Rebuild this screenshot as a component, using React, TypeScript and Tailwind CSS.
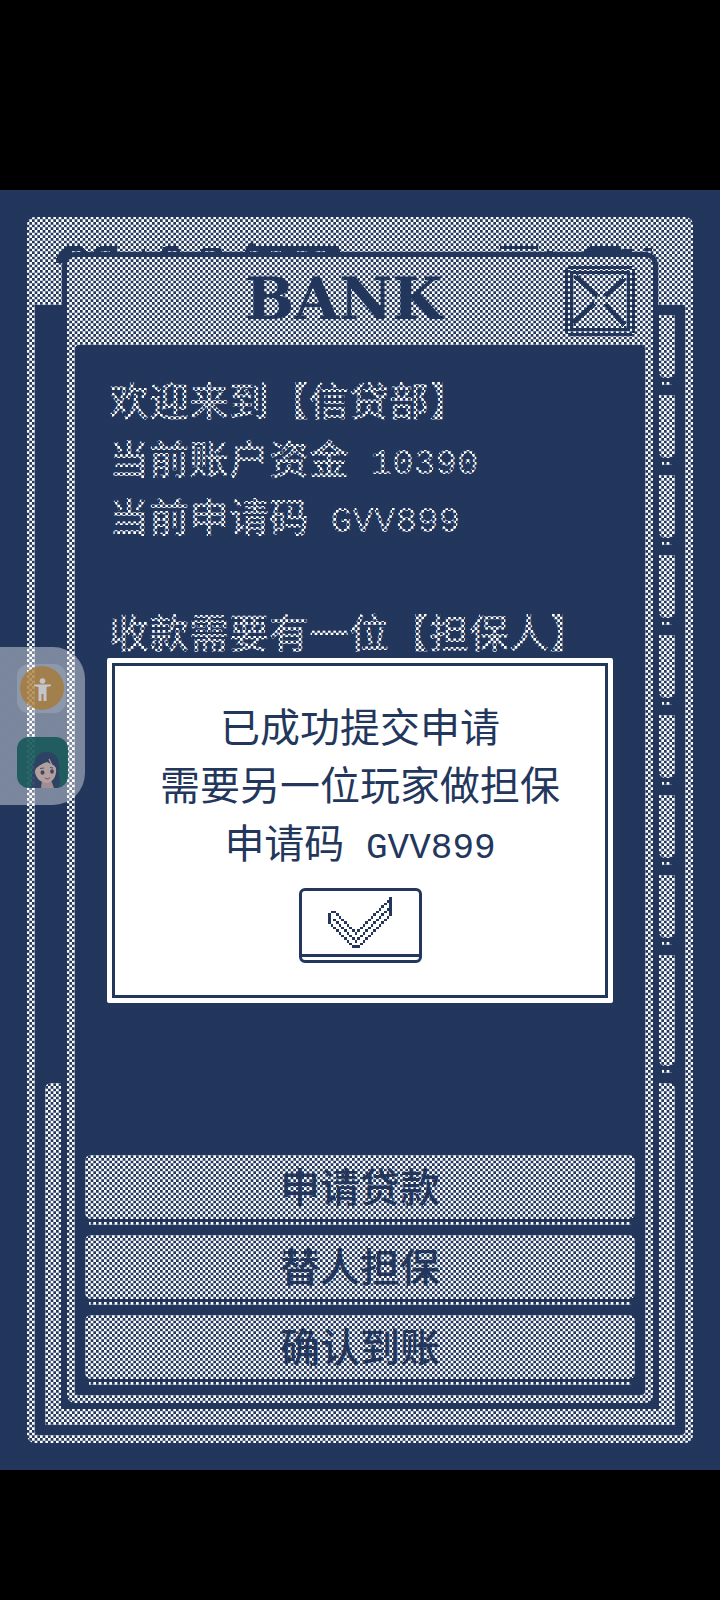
import React from "react";

const CJK = "font-['Noto_Sans_CJK_SC',sans-serif]";
const MONO = "font-['Liberation_Mono','Noto_Sans_CJK_SC',monospace]";

type Point = [number, number];

/** Pixels of a stepped line that runs through the given points. */
function pixelLine(points: Point[]): Point[] {
  const out: Point[] = [];
  for (let i = 0; i < points.length - 1; i++) {
    const [x0, y0] = points[i];
    const [x1, y1] = points[i + 1];
    const n = Math.max(Math.abs(x1 - x0), Math.abs(y1 - y0));
    for (let k = 0; k <= n; k++) {
      out.push([Math.round(x0 + ((x1 - x0) * k) / n), Math.round(y0 + ((y1 - y0) * k) / n)]);
    }
  }
  return out;
}

function toPath(pixels: Point[]) {
  return pixels.map(([x, y]) => `M${x} ${y}h1v1h-1z`).join("");
}

const CHECK = toPath([
  ...pixelLine([[0, 9], [0, 6], [1, 5], [2, 5], [10, 13], [23, 0], [23, 6], [11, 18], [9, 18], [0, 9]]),
  ...pixelLine([[2, 8], [10, 16], [23, 3]]),
]);

const DITHER_ROWS = Array.from({ length: 480 }, (_, y) => `M${(y + 1) % 2} ${y}.5H270`).join("");

/** One-pixel checkerboard that dims everything under the dialog. */
function Dither() {
  return (
    <svg
      aria-hidden="true"
      className="pointer-events-none absolute inset-0 h-full w-full"
      viewBox="0 0 270 480"
      preserveAspectRatio="none"
    >
      <path d={DITHER_ROWS} stroke="#23375d" strokeWidth="1" strokeDasharray="1 1" fill="none" />
    </svg>
  );
}

/** Tops of the status line that is covered by the bank window. */
function StatusTops() {
  return (
    <svg
      aria-hidden="true"
      className="h-5 w-full"
      viewBox="0 0 651 20"
      preserveAspectRatio="none"
      fill="#23375d"
      shapeRendering="crispEdges"
    >
      <path d="M21 20V16L24 11L29 5L33 3H47L50 7L54 10V20Z" />
      <path d="M58 20V11L61 5L66 3H82V11H84V20ZM107 6H110V16H107ZM120 16L126 9L129 4L134 3H141L145 8L148 12V20H120ZM166 16V8L169 5H185L188 10V20H166Z" />
      <path d="M210 8L213 3H215V0H218L221 3H304L306 12V20H212Z" />
      <path d="M466 3H504V6H466ZM474 11H484V14H474ZM508 11L514 8H519V16H506ZM550 8L556 3H586L588 8V16H554ZM588 6H598V12H588ZM610 5H618V8H610Z" />
      <path
        fill="#fff"
        d="M37 8H46V14H37ZM66 8H75V14H66ZM133 8H142V14H133ZM170 8H180V14H170ZM215 8H223V14H215ZM236 8H246V14H236ZM262 8H272V14H262ZM280 8H290V14H280Z"
      />
    </svg>
  );
}

function CloseIcon() {
  return (
    <svg aria-hidden="true" className="h-full w-full" viewBox="0 0 26 26" fill="#23375d" shapeRendering="crispEdges">
      <path
        fillRule="evenodd"
        d="M1 0H25V1H26V25H25V26H1V25H0V1H1ZM1 1V25H25V1ZM2 2H24V24H2ZM3 3V23H23V3Z"
      />
      <path d="M4 4L12 11M15 14L22 22M22 5L15 11M11 14L3 21" stroke="#23375d" strokeWidth="1.700" fill="none" />
    </svg>
  );
}

function Tab({ last = false }: { last?: boolean }) {
  return (
    <div className={last ? "flex min-h-16 flex-1 flex-col items-center gap-1" : "flex h-[70px] flex-col items-center gap-1"}>
      <div className="w-full flex-1 rounded-b-md bg-white" />
      <div className="h-[3px] w-2.5 bg-white" />
    </div>
  );
}

function BackWindow() {
  return (
    <div className="col-start-1 row-start-1 m-[27px] flex flex-col rounded-lg bg-white px-2 pb-2">
      <div className="h-[88px] pt-[26px]">
        <StatusTops />
      </div>
      <div className="flex flex-1 flex-col rounded-b-sm bg-[#23375d] p-2.5">
        <div className="flex flex-1 justify-end">
          <div className="flex w-4 flex-col gap-2.5 pb-2.5">
            {Array.from({ length: 8 }, (_, i) => (
              <Tab key={i} />
            ))}
            <Tab last />
          </div>
        </div>
        <div className="h-[342px] rounded-t-md border-x-16 border-b-16 border-white" />
      </div>
    </div>
  );
}

function BankWindow() {
  return (
    <section className="col-start-1 row-start-1 m-[67px] flex flex-col rounded-lg bg-white px-2 pb-2 ring-[5px] ring-[#23375d]">
      <header className="flex h-[88px] items-center pr-2.5 pl-12">
        <h1 className="flex-1 pb-1 text-center font-['DejaVu_Serif',serif] text-[58px] leading-none font-bold text-[#23375d]">
          BANK
        </h1>
        <button type="button" aria-label="关闭" className="size-[70px]">
          <CloseIcon />
        </button>
      </header>
      <div className="flex flex-1 flex-col rounded-sm bg-[#23375d] px-2.5 pt-[25px] pb-2.5">
        <div className={`px-6 text-[40px] leading-[58px] font-medium whitespace-nowrap text-white ${CJK}`}>
          <p>欢迎来到【信贷部】</p>
          <p>
            当前账户资金<span className={`text-4xl leading-none ${MONO}`}> 10390</span>
          </p>
          <p>
            当前申请码<span className={`text-4xl leading-none ${MONO}`}> GVV899</span>
          </p>
          <p className="mt-[58px]">收款需要有一位【担保人】</p>
        </div>
        <div className="mt-auto flex flex-col gap-2.5">
          {["申请贷款", "替人担保", "确认到账"].map((label) => (
            <button
              key={label}
              type="button"
              className={`flex h-[70px] flex-col text-[40px] font-medium text-[#23375d] ${CJK}`}
            >
              <span className="flex w-full flex-1 items-center justify-center rounded-md bg-white pb-1 leading-none">
                {label}
              </span>
              <span className="mt-[3px] h-[3px] w-full border-x-4 border-[#23375d] bg-white" />
            </button>
          ))}
        </div>
      </div>
    </section>
  );
}

function Dialog() {
  return (
    <div
      role="dialog"
      aria-label="已成功提交申请"
      className="relative z-10 col-start-1 row-start-1 mx-[107px] self-center rounded-xs bg-white p-[5px]"
    >
      <div
        className={`flex flex-col items-center border-3 border-[#23375d] pt-[30px] pb-8 text-[40px] leading-[58px] whitespace-nowrap text-[#23375d] ${CJK}`}
      >
        <p>已成功提交申请</p>
        <p>需要另一位玩家做担保</p>
        <p>
          申请码<span className={`text-4xl leading-none ${MONO}`}> GVV899</span>
        </p>
        <button
          type="button"
          aria-label="确定"
          className="mt-[18px] flex h-[75px] w-[123px] flex-col rounded-md border-3 border-[#23375d] pb-[3px]"
        >
          <span className="flex w-full flex-1 items-center justify-center border-b-3 border-[#23375d]">
            <svg aria-hidden="true" className="h-[51px] w-16" viewBox="0 0 24 19" fill="#23375d" shapeRendering="crispEdges">
              <path d={CHECK} />
            </svg>
          </span>
        </button>
      </div>
    </div>
  );
}

function FloatingDock() {
  return (
    <aside className="absolute top-[457px] left-0 z-20 flex w-[85px] flex-col gap-6 rounded-r-[32px] bg-white/40 py-[17px] pl-[17px]">
      <button type="button" aria-label="辅助功能" className="size-[49px] overflow-hidden rounded-xl bg-white/15">
        <svg aria-hidden="true" viewBox="0 0 49 49" className="h-full w-full">
          <circle cx="25" cy="24" r="22" fill="#a8782f" fillOpacity="0.75" />
          <g fill="#c5c5cc">
            <circle cx="25.500" cy="17" r="2.800" />
            <path d="M17 20.500H34V22L29.500 23V37H26.500V30H24.500V37H21.500V23L17 22Z" />
          </g>
        </svg>
      </button>
      <button type="button" aria-label="头像" className="size-[51px] overflow-hidden rounded-xl opacity-90">
        <svg aria-hidden="true" viewBox="0 0 51 51" className="h-full w-full">
          <rect width="51" height="51" fill="#17585a" />
          <path d="M13 51C17 43 14 38 16 29C18 18 25 14 31 15C40 16 43 24 42 32C41 40 45 45 41 51Z" fill="#263b5e" />
          <path d="M24 51L25 43H34L37 51Z" fill="#a58f91" />
          <path d="M18 34C19 28 25 27 30 25C33 27 38 27 39 31C40 39 36 45 30 46C24 46 18 41 18 34Z" fill="#b9a2a0" />
          <path d="M17 35C18 29 27 28 31 21C33 27 38 28 40 32C41 23 36 18 30 18C22 18 16 26 17 35Z" fill="#263b5e" />
          <ellipse cx="25.500" cy="35.500" rx="2" ry="2.300" fill="#3b4057" />
          <ellipse cx="35" cy="34.500" rx="1.800" ry="2.200" fill="#3b4057" />
          <path d="M23 31.500L27 31M33 30.500L36 31" stroke="#4a465a" strokeWidth="1" />
          <path d="M28 41Q31 43 33 40.500" fill="none" stroke="#885f67" strokeWidth="1.200" />
          <path d="M32 22L34.500 27" stroke="#b9a2a0" strokeWidth="1.200" />
        </svg>
      </button>
    </aside>
  );
}

export default function App() {
  return (
    <div className="flex min-h-screen flex-col bg-black pt-[190px] pb-[130px]">
      <main className="relative grid flex-1 grid-cols-1 bg-[#23375d]">
        <BackWindow />
        <BankWindow />
        <Dither />
        <Dialog />
        <FloatingDock />
      </main>
    </div>
  );
}
